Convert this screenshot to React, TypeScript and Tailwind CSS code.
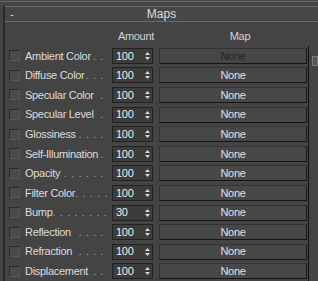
const maps = [
  { label: 'Ambient Color', dots: 2, amount: '100', dim: true },
  { label: 'Diffuse Color', dots: 3, amount: '100' },
  { label: 'Specular Color', dots: 1, amount: '100' },
  { label: 'Specular Level', dots: 1, amount: '100' },
  { label: 'Glossiness', dots: 4, amount: '100' },
  { label: 'Self-Illumination', dots: 1, amount: '100' },
  { label: 'Opacity', dots: 6, amount: '100' },
  { label: 'Filter Color', dots: 5, amount: '100' },
  { label: 'Bump', dots: 8, amount: '30' },
  { label: 'Reflection', dots: 4, amount: '100' },
  { label: 'Refraction', dots: 4, amount: '100' },
  { label: 'Displacement', dots: 2, amount: '100' },
];

function Spinner({ value }: { value: string }) {
  return (
    <div className="ml-[4px] flex h-[16px] w-[41px] border border-[#222] bg-[#3c3c3c]">
      <div className="flex w-[30px] items-center pl-[3px] text-[#ececec]">{value}</div>
      <div className="flex w-[9px] flex-col items-center justify-center gap-[2px]">
        <svg width="5" height="3" viewBox="0 0 5 3">
          <path d="M2.5 0L5 3H0z" fill="#d8d8d8" />
        </svg>
        <svg width="5" height="3" viewBox="0 0 5 3">
          <path d="M0 0H5L2.5 3z" fill="#d8d8d8" />
        </svg>
      </div>
    </div>
  );
}

export default function App() {
  return (
    <div className="h-[281px] w-[318px] overflow-hidden bg-[#444444] pt-[1px] font-['Liberation_Sans',Arial,sans-serif] text-[11px] tracking-[-0.3px] text-[#dcdcdc]">
      {/* top rule */}
      <div className="h-[1px] bg-[#686868]" />
      <div className="ml-[3px] mt-[4px] border-l-2 border-[#2a2a2a]">
        {/* rollout title */}
        <div className="flex h-[16px] items-center border-y border-[#6a6a6a] bg-[#474747]">
          <span className="w-[12px] pl-[5px] leading-none">-</span>
          <span className="flex-1 text-center text-[12px] tracking-normal">Maps</span>
          <span className="w-[12px]" />
        </div>

        <div className="pt-[6px]">
          {/* column headers */}
          <div className="flex h-[16px] items-center text-[#d2d2d2]">
            <span className="w-[149px] text-right">Amount</span>
            <span className="ml-[5px] w-[148px] pl-[14px] text-center">Map</span>
          </div>

          <div className="mt-[2px] flex">
            <div className="w-[304px] border-r border-[#111]">
              {maps.map((m) => (
                <div key={m.label} className="flex h-[19.6px] items-center pl-[4px]">
                  <div className="h-[11px] w-[11px] border border-[#2b2b2b] border-b-[#575757] border-r-[#575757] bg-[#4a4a4a]" />
                  <div className="ml-[5px] flex w-[83px] whitespace-nowrap">
                    <span>{m.label}</span>
                    <span className="ml-auto pr-[4px] tracking-[0.6px] text-[#a0a0a0]">
                      {Array(m.dots).fill('.').join(' ')}
                    </span>
                  </div>
                  <Spinner value={m.amount} />
                  <button
                    className={
                      'ml-[6px] flex h-[16px] w-[148px] items-center justify-center border border-[#333] border-b-[#151515] border-r-[#1a1a1a] bg-[#474747] ' +
                      (m.dim ? 'text-[#262626]' : 'text-[#e0e0e0]')
                    }
                  >
                    None
                  </button>
                </div>
              ))}
            </div>
            <div className="ml-[3px] mt-[10px] h-[10px] w-[6px] border border-[#7a7a7a] bg-[#505866]" />
          </div>
        </div>
      </div>
    </div>
  );
}
